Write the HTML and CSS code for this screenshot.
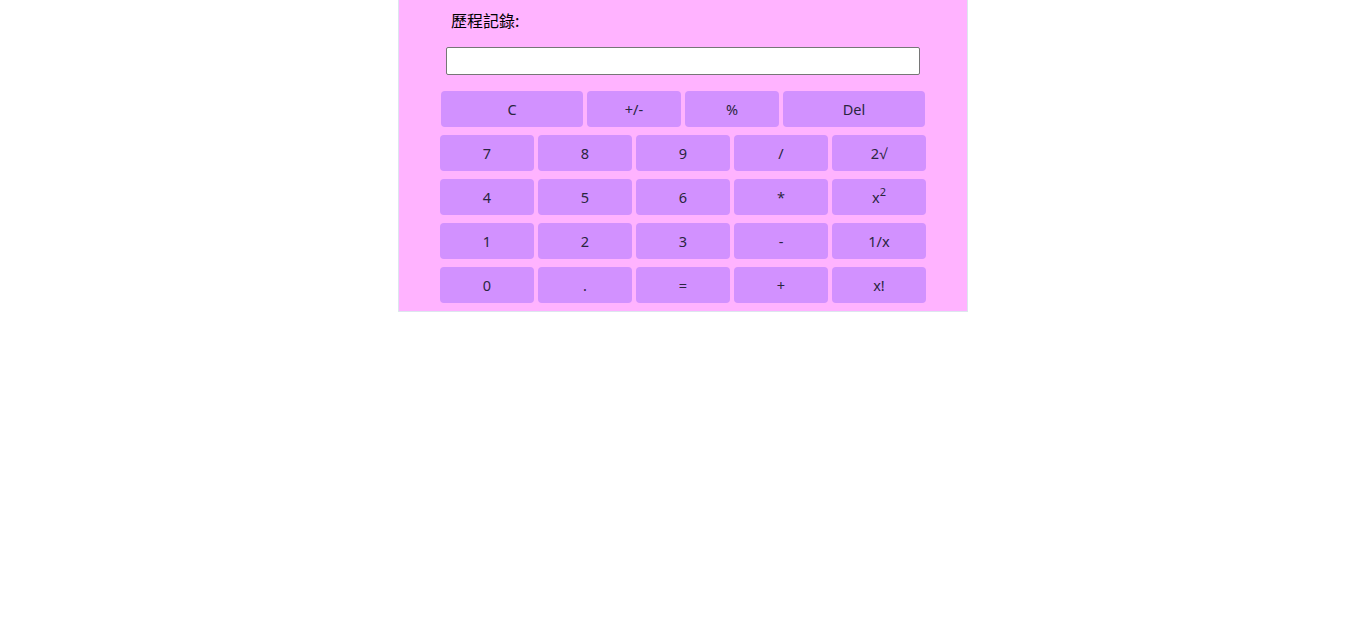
FILE: index.html
```html
<!DOCTYPE html>
<html lang="zh-Hant">
<head>
<meta charset="utf-8">
<title>計算機</title>
<link rel="stylesheet" href="styles.css">
</head>
<body>
<div class="calc">
  <div class="history">歷程記錄:</div>
  <input class="display" type="text">
  <div class="keys">
    <div class="row row-top">
      <button class="key wide">C</button>
      <button class="key">+/-</button>
      <button class="key">%</button>
      <button class="key wide">Del</button>
    </div>
    <div class="row">
      <button class="key">7</button>
      <button class="key">8</button>
      <button class="key">9</button>
      <button class="key">/</button>
      <button class="key">2√</button>
    </div>
    <div class="row">
      <button class="key">4</button>
      <button class="key">5</button>
      <button class="key">6</button>
      <button class="key">*</button>
      <button class="key">x<sup>2</sup></button>
    </div>
    <div class="row">
      <button class="key">1</button>
      <button class="key">2</button>
      <button class="key">3</button>
      <button class="key">-</button>
      <button class="key">1/x</button>
    </div>
    <div class="row">
      <button class="key">0</button>
      <button class="key">.</button>
      <button class="key">=</button>
      <button class="key">+</button>
      <button class="key">x!</button>
    </div>
  </div>
</div>
</body>
</html>
```
FILE: styles.css
```css
html, body {
  margin: 0;
  padding: 0;
  background: #ffffff;
}

.calc {
  width: 568px;
  margin: 0 auto;
  background: #ffb3ff;
  border: 1px solid #dde6ee;
  border-top: none;
  padding: 10px 0 8px;
}

.history {
  padding-left: 52px;
  font-family: "Noto Sans CJK TC", "Noto Sans", sans-serif;
  font-size: 16px;
  line-height: 20px;
  color: #000;
}

.display {
  display: block;
  box-sizing: border-box;
  width: 474px;
  height: 28px;
  margin: 17px auto 0;
  border: 1px solid #767676;
  border-radius: 2px;
  background: #fff;
  padding: 0 4px;
}

.keys {
  margin-top: 16px;
  display: flex;
  flex-direction: column;
  align-items: center;
  gap: 8px;
}

.row {
  display: flex;
  gap: 4px;
}

.key {
  width: 94px;
  height: 36px;
  border: none;
  border-radius: 4px;
  background: #d291ff;
  color: #2a2540;
  font-family: "Noto Sans", "Open Sans", sans-serif;
  font-size: 14.5px;
  padding: 0;
  line-height: 36px;
}

.key.wide {
  width: 142px;
}

.key sup {
  font-size: 11px;
  line-height: 0;
  vertical-align: 7px;
}
```
